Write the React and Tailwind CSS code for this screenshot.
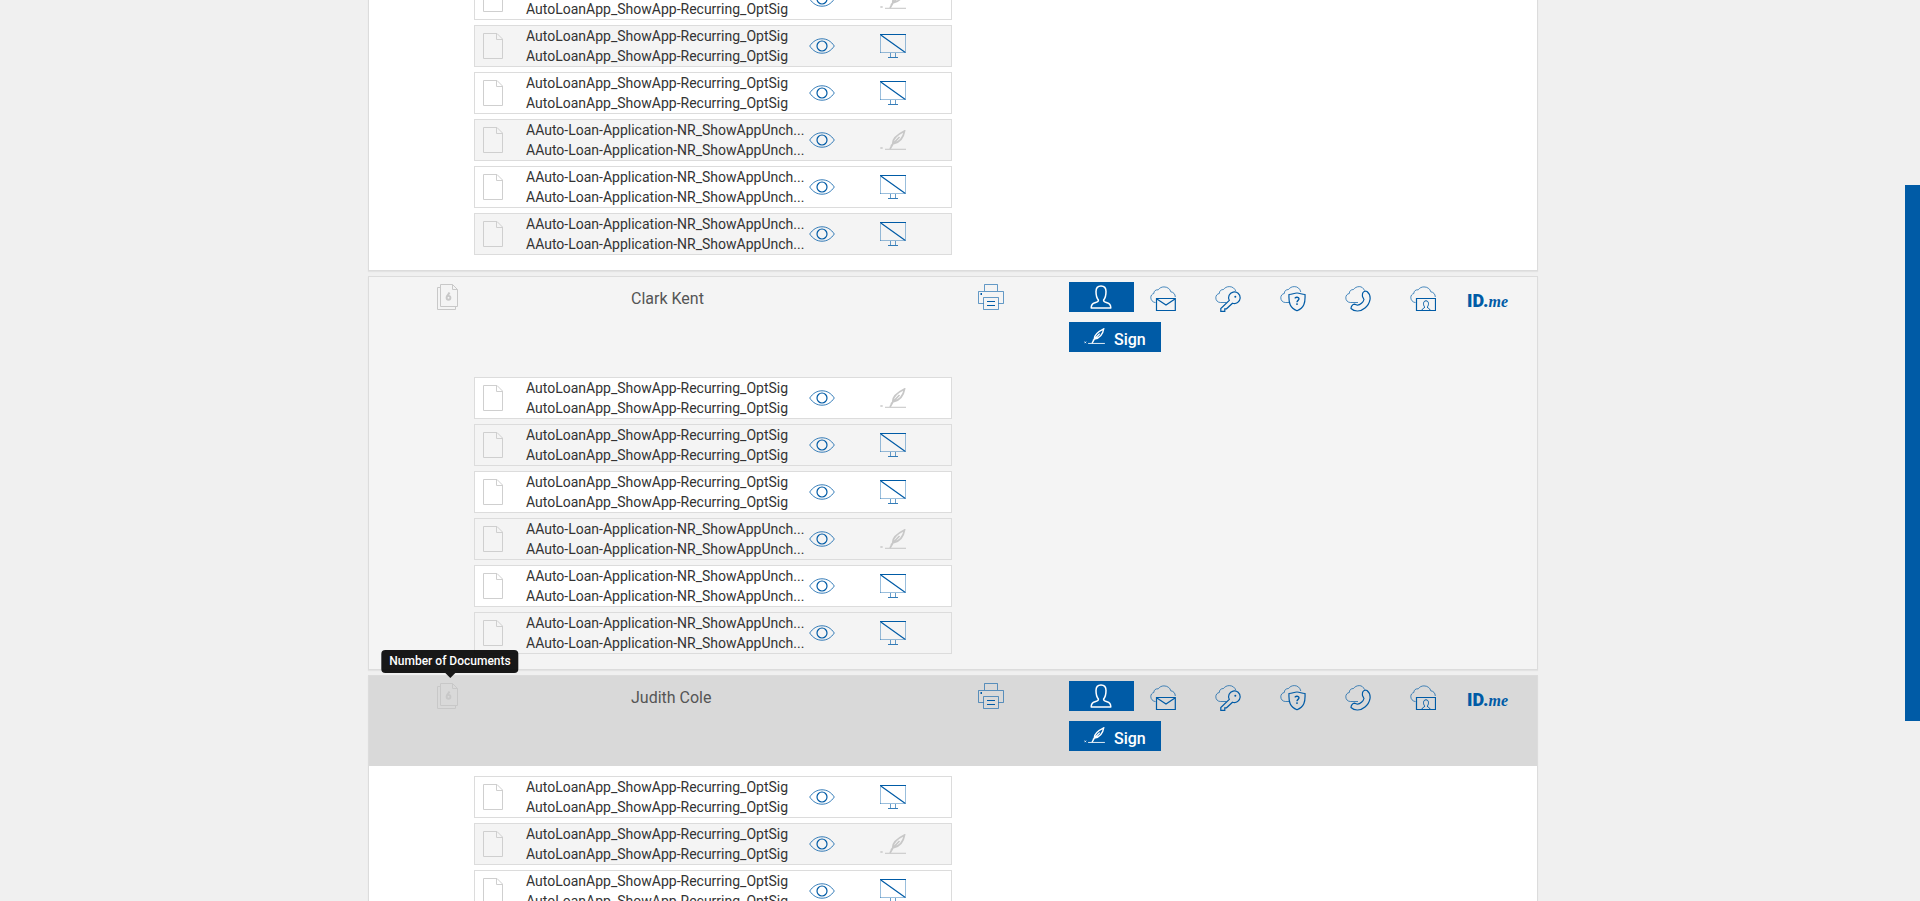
const NAMES = {
  opt: "AutoLoanApp_ShowApp-Recurring_OptSig",
  unch: "AAuto-Loan-Application-NR_ShowAppUnch...",
};

const DOCS = [
  [NAMES.opt, "sign"],
  [NAMES.opt, "screen"],
  [NAMES.opt, "screen"],
  [NAMES.unch, "sign"],
  [NAMES.unch, "screen"],
  [NAMES.unch, "screen"],
];

const DOCS_COLE = [
  [NAMES.opt, "screen"],
  [NAMES.opt, "sign"],
  [NAMES.opt, "screen"],
];

const CLOUD = "M5.500 16.500H5C2.500 16 .8 14 .8 11.500C.8 9.500 2 8 3.800 7.500C3.800 5 5.800 3.500 8.200 3.800C9.500 2 11.500 .9 14 .9C17.500 .9 20.200 3 20.800 5.800C23.500 6.200 25.200 8 25.300 11";

function PageIcon() {
  return (
    <svg className="h-[26px] w-5 shrink-0" viewBox="0 0 20 26" fill="none" stroke="#cfcfcf" aria-hidden="true">
      <path d="M.5 .5H14L19.500 6V25.500H.5Z" />
      <path d="M13.500 .5V6.500H19.500" />
    </svg>
  );
}

function StackIcon() {
  return (
    <svg className="h-[26px] w-[22px]" viewBox="0 0 22 26" fill="none" stroke="#c8c8c8" role="img" aria-label="6 documents">
      <path d="M3.500 .5H15.500L20.500 5.500V22.500H3.500Z" />
      <path d="M15.500 .5V5.500H20.500" />
      <path d="M3.500 3.500H.5V25.500H18.500V22.500" />
      <path d="M12.500 8.500L9.900 12.600" strokeWidth="2" />
      <circle cx="11.500" cy="13.800" r="1.900" strokeWidth="1.900" />
    </svg>
  );
}

function EyeIcon() {
  return (
    <svg className="h-4 w-[26px]" viewBox="0 0 26 16" fill="none" stroke="#005ba6" aria-hidden="true">
      <path d="M.7 8C4 3.200 8 .8 13 .8S22 3.200 25.300 8C22 12.800 18 15.200 13 15.200S4 12.800 .7 8Z" strokeWidth=".8" />
      <circle cx="13" cy="8" r="5" strokeWidth="1.200" />
    </svg>
  );
}

function ScreenIcon() {
  return (
    <svg className="h-6 w-[26px]" viewBox="0 0 26 24" fill="none" stroke="#005ba6" aria-hidden="true">
      <path d="M.5 .5V19M25.500 .5V19M0 18.500H26" strokeWidth=".4" />
      <path d="M0 .5H26M.8 1L25 18.300" strokeWidth="1.200" />
      <path d="M10.500 19V23M15.500 19V23" strokeWidth=".6" />
      <path d="M8 23.500H18" strokeWidth=".8" />
    </svg>
  );
}

function QuillIcon({ className }) {
  return (
    <svg className={className} viewBox="0 0 26 20" fill="none" stroke="currentColor" aria-hidden="true">
      <path d="M10 19L12.800 14C12.300 9.500 16.500 5 24.500 1C23.500 7.500 19.500 12.500 12.800 14L19.500 7" strokeWidth="1.700" />
      <path d="M5 19.300H26" strokeWidth="1.100" />
      <path d="M.5 17L2.500 19M2.500 17L.5 19" strokeWidth="1" />
    </svg>
  );
}

function PrinterIcon() {
  return (
    <svg className="size-[26px]" viewBox="0 0 26 26" fill="none" stroke="#005ba6" strokeWidth=".6" aria-hidden="true">
      <path d="M6.500 7V.5H19.500V7M5.500 19.500H.5V7.500H25.500V19.500H20.500" />
      <path d="M5.500 13.500H20.500V25.500H5.500Z" />
      <path d="M9 17.500H17M9 21.500H17" strokeWidth="1.200" />
      <path d="M2.500 10H4" strokeWidth="1.800" />
    </svg>
  );
}

function PersonIcon() {
  return (
    <svg className="h-6 w-[22px]" viewBox="0 0 22 24" fill="none" stroke="#fff" strokeWidth="1.500" strokeLinejoin="round" aria-hidden="true">
      <path d="M1.200 23C1.200 19.500 2.500 18.500 5 17.800C7.500 17.100 8.700 16.500 8.400 15C6.500 13 6 10 6 6.500C6 3 7.800 1 11 1S16 3 16 6.500C16 10 15.500 13 13.600 15C13.300 16.500 14.500 17.100 17 17.800C19.500 18.500 20.800 19.500 20.800 23Z" />
    </svg>
  );
}

function CloudIcon({ path, children }) {
  return (
    <svg className="size-[26px]" viewBox="0 0 26 26" fill="none" stroke="#005ba6" aria-hidden="true">
      <path d={path || CLOUD} strokeWidth=".7" />
      {children}
    </svg>
  );
}

const METHODS = [
  {
    label: "Email",
    icon: (
      <CloudIcon>
        <path d="M6.500 12.500H25.300V24.500H6.500ZM6.500 12.700L16 19L25.300 12.700" strokeWidth="1.200" />
      </CloudIcon>
    ),
  },
  {
    label: "Access key",
    icon: (
      <CloudIcon path="M11.500 16.500H5.500C2.700 16.500 .8 14.400 .8 11.800C.8 9.500 2.300 7.800 4.300 7.500C4.300 5 6 3.500 8.500 3.500C9.700 1.800 11.800 .6 14.300 .6C17.500 .6 20 2.500 20.800 5.300">
        <path d="M14.300 14.500A5.800 5.800 0 1 1 17.500 17.200L11.500 22.800H9.800V25.300H5.800V22.500Z" strokeWidth="1.200" />
        <circle cx="20.300" cy="10.800" r="1" fill="#005ba6" stroke="none" />
      </CloudIcon>
    ),
  },
  {
    label: "Security question",
    icon: (
      <CloudIcon path="M9 16.500H5.500C2.700 16.500 .8 14.400 .8 11.800C.8 9.500 2.300 7.800 4.300 7.500C4.300 5 6 3.500 8.500 3.500C9.700 1.800 11.800 .6 14.300 .6C17.500 .6 20 2.500 20.800 6">
        <path d="M9 8.500C12.500 8.500 13.800 7 17 7S21.500 8.500 25 8.500C25.500 17 24 22 17 24.800C10 22 8.500 17 9 8.500Z" strokeWidth="1.200" />
        <path d="M15 12.300C15.200 10.800 19 10.800 19 12.800C19 14.400 17 14.400 17 16.200M17 17.300V18.900" strokeWidth="1.400" />
      </CloudIcon>
    ),
  },
  {
    label: "Phone call",
    icon: (
      <CloudIcon path="M13 16.500H5.500C2.700 16.500 .8 14.400 .8 11.800C.8 9.500 2.300 7.800 4.300 7.500C4.300 5 6 3.500 8.500 3.500C9.700 1.800 11.800 .6 14.300 .6C16.500 .6 18.500 2 19.500 4.500">
        <path d="M18 6.500C19 5.200 21 5 22 5.500C27.500 10 25 18 20 22C15.500 25.800 9.500 26 6 22.500C6 20.500 7.500 18.200 9.500 18.200L12.500 19.200C15 19 18.500 16 19 13.500L17.500 10.500C17.300 9 17.300 7.800 18 6.500Z" strokeWidth="1.200" />
      </CloudIcon>
    ),
  },
  {
    label: "In person",
    icon: (
      <CloudIcon>
        <path d="M6.500 12.500H25.500V24.500H6.500Z" strokeWidth="1.200" />
        <path d="M12 24C12 22.500 14.500 22.500 14.800 21C13 19.500 12.800 14.800 16 14.800S19 19.500 17.200 21C17.500 22.500 20 22.500 20 24" strokeWidth="1" />
      </CloudIcon>
    ),
  },
];

function DocumentRow({ name, action, shaded }) {
  return (
    <li className={`flex h-[42px] items-center border border-[#dcdcdc] pl-2 ${shaded ? "bg-[#f4f4f4]" : "bg-white"}`}>
      <PageIcon />
      <div className="ml-[23px] w-[283px] whitespace-nowrap text-sm leading-5 text-[#333]">
        <p>{name}</p>
        <p>{name}</p>
      </div>
      <button type="button" aria-label="View document" className="mr-[45px]">
        <EyeIcon />
      </button>
      {action === "screen" ? (
        <button type="button" aria-label="Display only">
          <ScreenIcon />
        </button>
      ) : (
        <button type="button" aria-label="Signature" className="text-[#c8c8c8]">
          <QuillIcon className="h-5 w-[26px]" />
        </button>
      )}
    </li>
  );
}

function DocumentList({ docs }) {
  return (
    <ul className="ml-[105px] flex w-[478px] flex-col gap-[5px] pt-2.5 pb-[15px]">
      {docs.map(([name, action], i) => (
        <DocumentRow key={i} name={name} action={action} shaded={i % 2 === 1} />
      ))}
    </ul>
  );
}

function SignerHeader({ name, active }) {
  return (
    <header className={`grid h-[90px] grid-cols-[262px_347px_91px_1fr] ${active ? "bg-[#d9d9d9]" : ""}`}>
      <div className="pt-[7px] pl-[68px]">
        <div className="relative w-[26px]">
          <StackIcon />
          {active && (
            <div role="tooltip" className="absolute bottom-full left-1/2 mb-[10px] -translate-x-1/2 rounded bg-black/90 px-2 text-xs font-medium leading-[23px] whitespace-nowrap text-white">
              Number of Documents
              <span className="absolute top-full left-1/2 -ml-[5px] border-x-[5px] border-t-[5px] border-x-transparent border-t-black/90" />
            </div>
          )}
        </div>
      </div>
      <h2 className="pt-[10px] text-base leading-6 text-[#555]">{name}</h2>
      <div className="pt-[7px]">
        <button type="button" aria-label="Print">
          <PrinterIcon />
        </button>
      </div>
      <div className="flex flex-col items-start gap-2.5 pt-[5px]">
        <div className="flex h-[30px]">
          <button type="button" aria-label="Sign in person" className="flex w-[65px] items-center bg-[#005ba6] pl-[21px]">
            <PersonIcon />
          </button>
          {METHODS.map((m) => (
            <button key={m.label} type="button" aria-label={m.label} className="w-[65px] pt-1 pl-4">
              {m.icon}
            </button>
          ))}
          <button type="button" className="w-[60px] pt-2 pl-2 text-left text-lg leading-[22px] font-black text-[#005ba6]">
            ID.<span className="font-['Liberation_Serif',serif] text-base font-bold italic">me</span>
          </button>
        </div>
        <button type="button" className="flex h-[30px] items-center bg-[#005ba6] px-[15px] text-base font-medium text-white">
          <QuillIcon className="mr-[9px] mb-[2px] h-4 w-[21px]" />
          <span className="pt-1.5">Sign</span>
        </button>
      </div>
    </header>
  );
}

function Card({ shaded, children }) {
  return (
    <section className={`border border-[#dcdcdc] shadow-[0_1px_1px_rgba(0,0,0,0.05)] ${shaded ? "bg-[#f4f4f4]" : "bg-white"}`}>
      {children}
    </section>
  );
}

export default function App() {
  return (
    <div className="flex h-screen overflow-hidden bg-[#f0f0f0] font-[Roboto,sans-serif]">
      <main className="min-w-0 flex-1 pl-px">
        <div className="mx-auto -mt-[33px] flex max-w-[1170px] flex-col gap-[5px]">
          <Card>
            <DocumentList docs={DOCS} />
          </Card>
          <Card shaded>
            <SignerHeader name="Clark Kent" />
            <DocumentList docs={DOCS} />
          </Card>
          <Card>
            <SignerHeader name="Judith Cole" active />
            <DocumentList docs={DOCS_COLE} />
          </Card>
        </div>
      </main>
      <aside className="w-[15px] pt-[185px]">
        <div className="h-[536px] bg-[#005ba6]" />
      </aside>
    </div>
  );
}
